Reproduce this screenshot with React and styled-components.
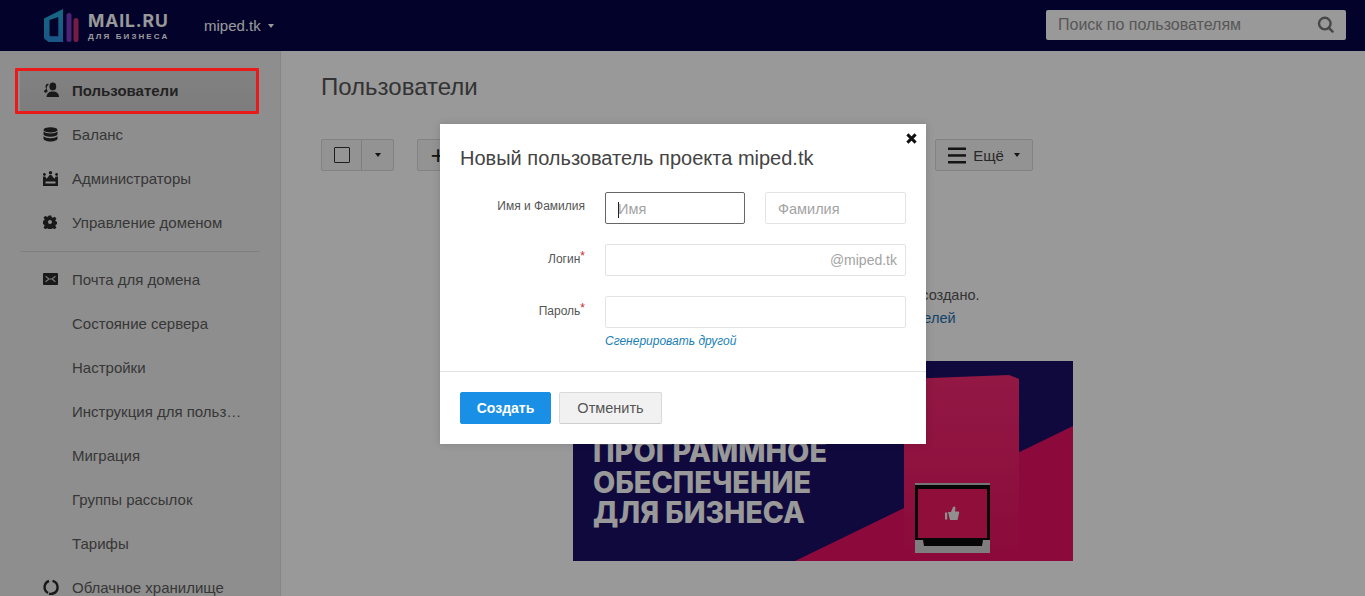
import React from 'react';
import styled, { createGlobalStyle } from 'styled-components';

const Global = createGlobalStyle`
  html, body { margin: 0; padding: 0; height: 100%; overflow: hidden; background: #fff; }
  body { font-family: "Liberation Sans", Arial, sans-serif; color: #444; }
  #root { height: 100%; }
  * { box-sizing: border-box; }
`;

const Page = styled.div`
  position: relative;
  width: 1365px;
  height: 596px;
  overflow: hidden;
  display: flex;
  flex-direction: column;
`;

const Header = styled.header`
  height: 51px;
  flex: none;
  background: #040448;
  display: flex;
  align-items: center;
  padding: 0 19px 0 44px;
`;

const LogoWrap = styled.div`
  display: flex;
  align-items: center;
  gap: 9px;
  width: 160px;
`;

const LogoText = styled.div`
  display: flex;
  flex-direction: column;
  color: #fff;
  padding-top: 2px;
`;

const LogoMain = styled.span`
  font: 700 17.5px/17px "Inter", "Liberation Sans", sans-serif;
  letter-spacing: 0.9px;
`;

const LogoSub = styled.span`
  font: 700 8px/10px "Liberation Sans", sans-serif;
  letter-spacing: 2.1px;
  margin-top: 3px;
`;

const DomainSwitch = styled.div`
  display: flex;
  align-items: center;
  gap: 7px;
  color: #fff;
  font-size: 15px;
`;

const Caret = styled.span`
  display: inline-block;
  width: 0;
  height: 0;
  border-left: 3.5px solid transparent;
  border-right: 3.5px solid transparent;
  border-top: 4px solid ${p => p.$color || '#222'};
  margin-left: ${p => p.$offset || 0}px;
`;

const Search = styled.div`
  margin-left: auto;
  align-self: flex-start;
  margin-top: 10px;
  width: 300px;
  height: 30px;
  background: #fff;
  border-radius: 2px;
  display: flex;
  align-items: center;
  justify-content: space-between;
  padding: 0 12px 1px;
  color: #919191;
  font-size: 16px;
`;

const Body = styled.div`
  flex: 1;
  display: flex;
  min-height: 0;
`;

const Sidebar = styled.nav`
  width: 281px;
  flex: none;
  background: #ededed;
  border-right: 1px solid #e0e0e0;
  padding: 17px 20px 0 20px;
  overflow: hidden;
`;

const NavRow = styled.div`
  height: 44px;
  display: flex;
  align-items: center;
  padding-left: 23px;
  width: ${p => (p.$active ? '236px' : 'auto')};
  background: ${p => (p.$active ? 'linear-gradient(#d8d8d8, #d0d0d0)' : 'transparent')};
  font-size: 15px;
  font-weight: ${p => (p.$active ? 700 : 400)};
  color: ${p => (p.$active ? '#3a3a3a' : '#5c5c5c')};
  white-space: nowrap;
`;

const NavIcon = styled.span`
  width: 29px;
  flex: none;
  display: flex;
  align-items: center;
  color: #2a2a2a;
`;

const NavDivider = styled.div`
  height: 1px;
  background: #d4d4d4;
  margin: 7px 0 5px;
`;

const Main = styled.main`
  flex: 1;
  padding: 22px 0 0 40px;
  min-width: 0;
`;

const Title = styled.h1`
  margin: 0;
  font-size: 24px;
  line-height: 28px;
  font-weight: 400;
  color: #555;
`;

const Toolbar = styled.div`
  display: flex;
  margin-top: 38px;
  height: 32px;
`;

const ToolGroup = styled.div`
  display: flex;
  height: 32px;
  background: #f5f5f5;
  border: 1px solid #d9d9d9;
  border-radius: 2px;
  margin-right: ${p => p.$gap || 0}px;
  width: ${p => p.$width}px;
  flex: none;
`;

const ToolCell = styled.div`
  display: flex;
  align-items: center;
  justify-content: center;
  width: ${p => p.$width}px;
  border-right: ${p => (p.$divider ? '1px solid #d4d4d4' : 'none')};
  font-size: 15px;
  color: #444;
  gap: 7px;
`;

const CheckBox = styled.span`
  width: 16px;
  height: 16px;
  border: 1px solid #333;
  border-radius: 1px;
  background: #f8f8f8;
`;

const PlusMark = styled.span`
  font-size: 26px;
  line-height: 26px;
  font-weight: 400;
  color: #222;
`;

const EmptyBlock = styled.section`
  width: 1004px;
  margin-top: 113px;
  text-align: center;
  font-size: 14.5px;
  line-height: 23px;
  color: #555;
`;

const EmptyLink = styled.a`
  color: #1f6fb0;
  display: block;
`;

const Banner = styled.svg`
  display: block;
  margin: 31px auto 0 252px;
  width: 500px;
  height: 200px;
`;

const Dim = styled.div`
  position: absolute;
  inset: 0;
  background: rgba(0, 0, 0, 0.4);
`;

const Highlight = styled.div`
  position: absolute;
  left: 15px;
  top: 68px;
  width: 244px;
  height: 46px;
  border: 3px solid #e81a1a;
  border-radius: 1px;
`;

const Modal = styled.div`
  position: absolute;
  left: 440px;
  top: 124px;
  width: 486px;
  height: 320px;
  background: #fff;
  box-shadow: 0 0 8px rgba(0, 0, 0, 0.15);
  display: flex;
  flex-direction: column;
`;

const Close = styled.div`
  position: absolute;
  right: 9px;
  top: 9px;
  width: 11px;
  height: 11px;
  display: flex;
`;

const ModalTitle = styled.h2`
  margin: 0;
  padding: 22px 20px 0;
  font-size: 20px;
  line-height: 24px;
  font-weight: 400;
  color: #444;
`;

const Form = styled.div`
  padding: 22px 20px 0 0;
  display: flex;
  flex-direction: column;
  gap: 20px;
`;

const FormRow = styled.div`
  display: flex;
  align-items: flex-start;
`;

const FormLabel = styled.label`
  width: 145px;
  padding-top: ${p => p.$top}px;
  flex: none;
  text-align: right;
  font-size: 12px;
  line-height: 16px;
  color: #555;
`;

const Required = styled.sup`
  color: #d0252f;
  font-size: 12px;
  line-height: 0;
  vertical-align: 3px;
`;

const Fields = styled.div`
  margin-left: 20px;
  width: 301px;
  display: flex;
  gap: 20px;
`;

const Field = styled.div`
  flex: ${p => (p.$width ? `0 0 ${p.$width}px` : '1')};
  height: 32px;
  position: relative;
  border: 1px solid ${p => (p.$focus ? '#666' : '#e3e3e3')};
  border-radius: 2px;
  display: flex;
  align-items: center;
  justify-content: ${p => (p.$right ? 'flex-end' : 'flex-start')};
  padding: ${p => (p.$right ? '0 8px 0' : '2px 12px 0')};
  font-size: ${p => (p.$right ? '14px' : '14.5px')};
  color: #a3a3a3;
`;

const TextCaret = styled.span`
  position: absolute;
  left: 12px;
  top: 9px;
  width: 1px;
  height: 16px;
  background: #222;
`;

const GenLink = styled.a`
  display: block;
  margin: 8px 0 0 165px;
  font-size: 12px;
  line-height: 11px;
  font-style: italic;
  color: #1a7fb5;
`;

const ModalFooter = styled.div`
  margin-top: 24px;
  border-top: 1px solid #e3e3e3;
  padding: 20px 20px 0;
  display: flex;
  gap: 8px;
`;

const Button = styled.button`
  height: 32px;
  width: ${p => p.$width}px;
  border-radius: 2px;
  font: ${p => (p.$primary ? '700 14px' : '400 14.5px')} "Liberation Sans", sans-serif;
  background: ${p => (p.$primary ? '#1a8fe6' : '#f1f1f1')};
  color: ${p => (p.$primary ? '#fff' : '#555')};
  border: 1px solid ${p => (p.$primary ? '#1a8fe6' : '#dadada')};
  border-bottom-color: ${p => (p.$primary ? '#1a8fe6' : '#cfcfcf')};
  padding: 0;
`;

const Logo = () => (
  <svg width="35" height="34" viewBox="0 0 35 34" fill="none">
    <defs>
      <linearGradient id="logoBlue" x1="0" y1="0" x2="0" y2="1">
        <stop offset="0" stopColor="#23b0d8" />
        <stop offset="1" stopColor="#2c8fe0" />
      </linearGradient>
    </defs>
    <path
      fillRule="evenodd"
      d="M0 9.500 19 0V33H4.500L0 29.500zM5.500 11v15.500l1 .8H14.300V8z"
      fill="url(#logoBlue)"
    />
    <rect x="22.500" y="4" width="5" height="29" rx="2.500" fill="#7d3fc4" />
    <rect x="29.500" y="9" width="5" height="24" rx="2.500" fill="#c4316e" />
  </svg>
);

const UsersIcon = () => (
  <svg width="16" height="16" viewBox="0 0 16 16" fill="currentColor">
    <ellipse cx="9.800" cy="4.400" rx="3.400" ry="3.900" />
    <path d="M3.600 15c0-3.600 2.400-5.600 6.200-5.600S16 11.400 16 15z" />
    <path d="M5.200 1.600C3.200 1.900 2.200 3.400 2.600 5.200l.7 1.600-2.600 2.500 2 1.800 2-1.600-.9-2.600C3.600 5 4.200 3.600 5.600 3z" />
  </svg>
);

const DbIcon = () => (
  <svg width="15" height="15" viewBox="0 0 15 15" fill="currentColor">
    <ellipse cx="7.500" cy="2.900" rx="7" ry="2.700" />
    <path d="M.5 4.600v2.600c0 1.300 3 2.500 7 2.500s7-1.200 7-2.500V4.600c-1.300 1.300-4 2-7 2s-5.700-.7-7-2z" />
    <path d="M.5 9.200v2.500c0 1.400 3 2.700 7 2.700s7-1.300 7-2.700V9.200c-1.300 1.300-4 2-7 2s-5.700-.7-7-2z" />
  </svg>
);

const CrownIcon = () => (
  <svg width="15" height="15" viewBox="0 0 15 15" fill="currentColor">
    <circle cx="7.500" cy="1.800" r="1.700" />
    <circle cx="1.400" cy="3.500" r="1.400" />
    <circle cx="13.600" cy="3.500" r="1.400" />
    <path
      fillRule="evenodd"
      d="M0 5.500h2.200l1.500 2.300L6.600 4h1.800l2.900 3.800 1.500-2.300H15V15H0zM2.500 10.500v2h10v-2z"
    />
  </svg>
);

const GearIcon = () => (
  <svg width="14" height="14" viewBox="0 0 14 14" fill="currentColor">
    <path
      fillRule="evenodd"
      d="M5.600 0h2.800l.4 2 1.300.6 1.800-1.200 2 2-1.200 1.800.6 1.300 2 .4v2.400l-2 .4-.6 1.300 1.200 1.800-2 2-1.800-1.200-1.300.6-.4 2H5.600l-.4-2-1.300-.6-1.800 1.200-2-2 1.200-1.800-.6-1.300-2-.4V5.900l2-.4.6-1.300L.1 2.400l2-2 1.800 1.200 1.300-.6zM7 4.900a2.100 2.100 0 1 0 0 4.200 2.100 2.100 0 0 0 0-4.200z"
      transform="translate(.4 .4) scale(.94)"
    />
  </svg>
);

const MailIcon = () => (
  <svg width="15" height="12" viewBox="0 0 15 12">
    <rect width="15" height="12" rx="1" fill="currentColor" />
    <path d="M2.600 3.200 6 6l-3.400 2.800M12.400 3.200 9 6l3.400 2.800M6 6h3" stroke="#c8c8c8" strokeWidth="1.200" fill="none" />
  </svg>
);

const RingIcon = () => (
  <svg width="16" height="16" viewBox="0 0 16 16" fill="none" stroke="currentColor" strokeWidth="2.400">
    <path d="M6 2a6.600 6.600 0 0 0-1 12" />
    <path d="M9.500 1.800A6.600 6.600 0 0 1 10 14.500 6.600 6.600 0 0 1 6 14.600" />
  </svg>
);

const SearchIcon = () => (
  <svg width="17" height="17" viewBox="0 0 17 17" fill="none" stroke="#777" strokeWidth="2.400">
    <circle cx="7.800" cy="7.600" r="5.800" />
    <path d="M11.800 11.800 15.600 15.600" strokeLinecap="round" />
  </svg>
);

const HamburgerIcon = () => (
  <svg width="18" height="17" viewBox="0 0 18 17" fill="#222">
    <rect y="0.500" width="18" height="2.500" />
    <rect y="7.200" width="18" height="2.500" />
    <rect y="14" width="18" height="2.500" />
  </svg>
);

const CloseIcon = () => (
  <svg width="11" height="11" viewBox="0 0 12 12" stroke="#111" strokeWidth="3.200" fill="none">
    <path d="M1.500 1.500 10.500 10.500M10.500 1.500 1.500 10.500" />
  </svg>
);

const BannerArt = () => (
  <Banner viewBox="0 0 500 200">
    <defs>
      <linearGradient id="boxFill" x1="0" y1="0" x2="0" y2="1">
        <stop offset="0" stopColor="#f52872" />
        <stop offset="1" stopColor="#e81462" />
      </linearGradient>
    </defs>
    <rect width="500" height="200" fill="#1a0f68" />
    <path d="M222 200 500 65V200Z" fill="#ea1064" />
    <path d="M331 18 L436 14 L446 18 L446 190 L331 189 Z" fill="url(#boxFill)" />
    <rect x="342" y="122" width="75" height="64" fill="#0a0a0a" />
    <rect x="342" y="122" width="75" height="2" fill="#c4c4c4" />
    <rect x="345" y="128" width="69" height="49" fill="#f01a62" />
    <path d="M342 179h8l1 6h58l1-6h7v13h-75z" fill="#d2d2d2" />
    <path
      transform="translate(0 -7)"
      d="M375 158h3l2-5c1-1 2.500-.5 2.500 1l-.5 3.500h3c1 0 1.500 1 1 2l-1.500 6.500h-7.500zM372 158.500h2.200v7H372z"
      fill="#eeeeee"
    />
    <g fill="#ffffff" fontFamily="Inter, 'Noto Sans', sans-serif" fontWeight="800" fontSize="29.500">
      <text x="20" y="101" textLength="234" lengthAdjust="spacingAndGlyphs">ПРОГРАММНОЕ</text>
      <text x="20" y="132" textLength="218" lengthAdjust="spacingAndGlyphs">ОБЕСПЕЧЕНИЕ</text>
      <text x="20" y="162" textLength="212" lengthAdjust="spacingAndGlyphs">ДЛЯ БИЗНЕСА</text>
    </g>
  </Banner>
);

const navTop = [
  { label: 'Пользователи', icon: <UsersIcon />, active: true },
  { label: 'Баланс', icon: <DbIcon /> },
  { label: 'Администраторы', icon: <CrownIcon /> },
  { label: 'Управление доменом', icon: <GearIcon /> },
];

const navBottom = [
  { label: 'Почта для домена', icon: <MailIcon /> },
  { label: 'Состояние сервера' },
  { label: 'Настройки' },
  { label: 'Инструкция для польз…' },
  { label: 'Миграция' },
  { label: 'Группы рассылок' },
  { label: 'Тарифы' },
  { label: 'Облачное хранилище', icon: <RingIcon /> },
];

const Nav = ({ item }) => (
  <NavRow $active={item.active}>
    <NavIcon>{item.icon}</NavIcon>
    {item.label}
  </NavRow>
);

export default function App() {
  return (
    <Page>
      <Global />
      <Header>
        <LogoWrap>
          <Logo />
          <LogoText>
            <LogoMain>MAIL.RU</LogoMain>
            <LogoSub>ДЛЯ БИЗНЕСА</LogoSub>
          </LogoText>
        </LogoWrap>
        <DomainSwitch>
          miped.tk <Caret $color="#fff" />
        </DomainSwitch>
        <Search>
          Поиск по пользователям
          <SearchIcon />
        </Search>
      </Header>
      <Body>
        <Sidebar>
          {navTop.map(i => <Nav key={i.label} item={i} />)}
          <NavDivider />
          {navBottom.map(i => <Nav key={i.label} item={i} />)}
        </Sidebar>
        <Main>
          <Title>Пользователи</Title>
          <Toolbar>
            <ToolGroup $width={73} $gap={23}>
              <ToolCell $width={41} $divider><CheckBox /></ToolCell>
              <ToolCell $width={31}><Caret /></ToolCell>
            </ToolGroup>
            <ToolGroup $width={495} $gap={23}>
              <ToolCell $width={40}><PlusMark>+</PlusMark></ToolCell>
            </ToolGroup>
            <ToolGroup $width={98}>
              <ToolCell $width={96}><HamburgerIcon /> Ещё <Caret $offset={3} /></ToolCell>
            </ToolGroup>
          </Toolbar>
          <EmptyBlock>
            Пока ни одного пользователя ещё не создано.
            <EmptyLink>Создайте или загрузите пользователей</EmptyLink>
          </EmptyBlock>
          <BannerArt />
        </Main>
      </Body>
      <Dim />
      <Highlight />
      <Modal>
        <Close><CloseIcon /></Close>
        <ModalTitle>Новый пользователь проекта miped.tk</ModalTitle>
        <Form>
          <FormRow>
            <FormLabel $top={6}>Имя и Фамилия</FormLabel>
            <Fields>
              <Field $focus $width={140}><TextCaret />Имя</Field>
              <Field>Фамилия</Field>
            </Fields>
          </FormRow>
          <FormRow>
            <FormLabel $top={7}>Логин<Required>*</Required></FormLabel>
            <Fields>
              <Field $right>@miped.tk</Field>
            </Fields>
          </FormRow>
          <FormRow>
            <FormLabel $top={7}>Пароль<Required>*</Required></FormLabel>
            <Fields>
              <Field />
            </Fields>
          </FormRow>
        </Form>
        <GenLink>Сгенерировать другой</GenLink>
        <ModalFooter>
          <Button $primary $width={91}>Создать</Button>
          <Button $width={103}>Отменить</Button>
        </ModalFooter>
      </Modal>
    </Page>
  );
}
